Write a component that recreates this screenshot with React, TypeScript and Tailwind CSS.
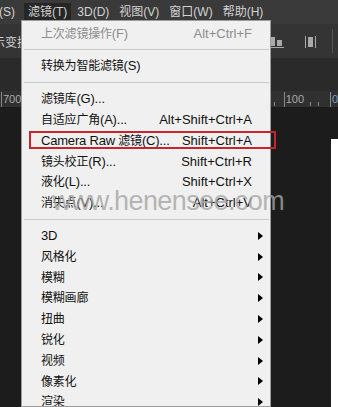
import React from "react";

const font = { fontFamily: '"Liberation Sans", "Noto Sans CJK SC", sans-serif' };

type Item =
  | { kind: "sep" }
  | { kind: "item"; label: string; shortcut?: string; disabled?: boolean; sub?: boolean };

const items: Item[] = [
  { kind: "item", label: "上次滤镜操作(F)", shortcut: "Alt+Ctrl+F", disabled: true },
  { kind: "sep" },
  { kind: "item", label: "转换为智能滤镜(S)" },
  { kind: "sep" },
  { kind: "item", label: "滤镜库(G)..." },
  { kind: "item", label: "自适应广角(A)...", shortcut: "Alt+Shift+Ctrl+A" },
  { kind: "item", label: "Camera Raw 滤镜(C)...", shortcut: "Shift+Ctrl+A" },
  { kind: "item", label: "镜头校正(R)...", shortcut: "Shift+Ctrl+R" },
  { kind: "item", label: "液化(L)...", shortcut: "Shift+Ctrl+X" },
  { kind: "item", label: "消失点(V)...", shortcut: "Alt+Ctrl+V" },
  { kind: "sep" },
  { kind: "item", label: "3D", sub: true },
  { kind: "item", label: "风格化", sub: true },
  { kind: "item", label: "模糊", sub: true },
  { kind: "item", label: "模糊画廊", sub: true },
  { kind: "item", label: "扭曲", sub: true },
  { kind: "item", label: "锐化", sub: true },
  { kind: "item", label: "视频", sub: true },
  { kind: "item", label: "像素化", sub: true },
  { kind: "item", label: "渲染", sub: true },
];

// latin glyphs run a bit wider than the CJK ones in the shot
function Mixed({ text }: { text: string }) {
  const parts = text.split(/([\u4e00-\u9fff]+)/).filter(Boolean);
  return (
    <>
      {parts.map((p, i) =>
        /[\u4e00-\u9fff]/.test(p) ? (
          <span key={i} className="text-[12px]">{p}</span>
        ) : (
          <span key={i}>{p}</span>
        )
      )}
    </>
  );
}

function MenuBar() {
  const names = ["3D(D)", "视图(V)", "窗口(W)", "帮助(H)"];
  return (
    <div className="h-[24px] bg-[#3a3a3a] flex items-start text-[12px] text-[#d2d2d2] overflow-hidden whitespace-nowrap">
      <div className="ml-[-30px] px-[5px] h-[20px] mt-[2px] flex items-center">选择(S)</div>
      <div className="ml-[4px] px-[4px] h-[18px] mt-[3px] flex items-center bg-[#262626]">滤镜(T)</div>
      {names.map((n, i) => (
        <div key={n} className={`${i === 0 ? "ml-[1px]" : "ml-0"} px-[5px] h-[20px] mt-[2px] flex items-center`}>{n}</div>
      ))}
    </div>
  );
}

function OptionsBar() {
  return (
    <div className="h-[34px] bg-[#343434] flex items-center text-[12px] text-[#cfcfcf]">
      <span className="ml-[-19px] mt-[3px] whitespace-nowrap">显示变换控件</span>
      <div className="flex-1" />
      <svg width="15" height="14" viewBox="0 0 15 14" className="mr-[21px] mt-[2px]">
        <rect x="1" y="2" width="5" height="9" fill="#a9a9a9" />
        <rect x="8" y="5" width="5" height="6" fill="#a9a9a9" />
        <rect x="0" y="12" width="15" height="1" fill="#a9a9a9" />
      </svg>
      <svg width="11" height="14" viewBox="0 0 11 14" className="mr-[16px] mt-[2px]">
        <rect x="0" y="1" width="1" height="12" fill="#a9a9a9" />
        <rect x="3" y="2" width="5" height="10" fill="#a9a9a9" />
        <rect x="10" y="1" width="1" height="12" fill="#a9a9a9" />
      </svg>
      <div className="w-px h-[24px] bg-[#555] mr-[5px]" />
    </div>
  );
}

function Tick({ tall }: { tall?: boolean }) {
  return <div className={tall ? "w-px h-[15px] self-start mt-[1px] bg-[#8a8a8a]" : "w-px h-[4px] self-end mb-[1px] bg-[#8a8a8a]"} />;
}

function Ruler() {
  return (
    <div className="h-[17px] bg-[#303030] border-b border-[#1a1a1a] text-[11px] text-[#a8a8a8] leading-none flex items-center overflow-hidden whitespace-nowrap">
      <div className="ml-[1px]"><Tick tall /></div>
      <span className="ml-[1px]">700</span>
      <div className="flex-1" />
      <Tick />
      <div className="ml-[9px] flex items-center h-full"><Tick tall /></div>
      <span className="ml-[1px]">100</span>
      <div className="ml-[6px] h-full flex"><Tick /></div>
      <div className="ml-[7px] h-full flex"><Tick /></div>
      <div className="ml-[11px] h-full flex"><Tick tall /></div>
      <span className="ml-[1px] w-[6px] text-[#7f9ccc]">0</span>
    </div>
  );
}

function Arrow() {
  return (
    <svg width="5" height="8" viewBox="0 0 5 8">
      <path d="M0 0 L5 4 L0 8 Z" fill="#000" />
    </svg>
  );
}

function Dropdown() {
  return (
    <div className="absolute left-[21px] top-[20px] w-[250px] bottom-0 bg-[#f0f0f0] border border-[#9c9c9c] pt-[2px] overflow-hidden text-[13px]">
      {items.map((it, i) =>
        it.kind === "sep" ? (
          <div key={i} className="h-[12px] flex items-center pl-[2px] pr-[1px]">
            <div className="h-px w-full bg-[#c9c9c9]" />
          </div>
        ) : (
          <div
            key={i}
            className={`h-[20.8px] flex items-center pl-[19px] whitespace-nowrap ${it.disabled ? "text-[#8d8d8d]" : "text-[#111]"}`}
          >
            <span className="flex-1 tracking-[-0.2px]"><Mixed text={it.label} /></span>
            {it.shortcut && <span>{it.shortcut}</span>}
            <div className="w-[18px] flex items-center pl-[6px]">{it.sub && <Arrow />}</div>
          </div>
        )
      )}
    </div>
  );
}

export default function App() {
  return (
    <div className="relative w-[338px] h-[407px] overflow-hidden bg-[#1c1c1c]" style={font}>
      <MenuBar />
      <OptionsBar />
      <div className="h-[33px] bg-[#2a2a2a]" />
      <Ruler />
      <div className="flex justify-end pt-[31px]">
        <div className="w-[7px] h-[300px] bg-white" />
      </div>
      <Dropdown />
      <div className="absolute left-[29px] top-[131px] w-[247px] h-[18px] border-2 border-[#c4262b]" />
      <div className="absolute left-[52px] top-[188px] text-[27px] leading-none tracking-[-0.6px] text-[#a4a4a4]/80 whitespace-nowrap pointer-events-none">
        www.henensee.com
      </div>
    </div>
  );
}
